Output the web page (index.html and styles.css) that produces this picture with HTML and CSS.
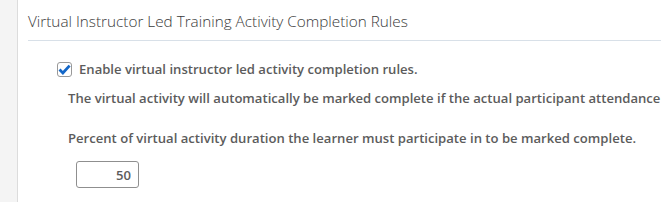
FILE: index.html
```html
<!DOCTYPE html>
<html>
<head>
<meta charset="utf-8">
<link rel="stylesheet" href="styles.css">
</head>
<body>
<div class="page">
  <div class="rail"></div>
  <div class="content">
    <h2 class="title">Virtual Instructor Led Training Activity Completion Rules</h2>
    <div class="section">
      <label class="check-row">
        <span class="checkbox">
          <svg width="13" height="13" viewBox="0 0 13 13"><path d="M1.5 6.5 L4.9 9.9 L11.6 2.6" fill="none" stroke="#1467c8" stroke-width="2.8"/></svg>
        </span>
        <span class="check-label">Enable virtual instructor led activity completion rules.</span>
      </label>
      <p class="desc">The virtual activity will automatically be marked complete if the actual participant attendance</p>
      <p class="desc percent">Percent of virtual activity duration the learner must participate in to be marked complete.</p>
      <div class="input-row">
        <input class="num" type="text" value="50">
      </div>
    </div>
  </div>
</div>
</body>
</html>
```
FILE: styles.css
```css
html, body {
  margin: 0;
  padding: 0;
  background: #ffffff;
  overflow: hidden;
}
.page {
  display: flex;
  height: 202px;
  font-family: "Open Sans", "Noto Sans", sans-serif;
}
.rail {
  width: 17px;
  flex: none;
  background: #f4f4f4;
  border-right: 1px solid #dcdcdc;
}
.content {
  flex: 1;
  padding-left: 10px;
  min-width: 0;
  white-space: nowrap;
}
.title {
  margin: 0;
  padding-top: 10px;
  height: 30px;
  font-size: 15.3px;
  font-weight: 300;
  color: #3a3a3a;
  line-height: 22px;
  border-bottom: 1px solid #d8e0e8;
}
.section {
  padding-left: 29px;
  padding-top: 20px;
}
.check-row {
  display: flex;
  align-items: center;
  gap: 7px;
  height: 16px;
}
.checkbox {
  width: 13px;
  height: 13px;
  border: 1px solid #999999;
  border-radius: 3px;
  display: flex;
  align-items: center;
  justify-content: center;
  background: #fff;
}
.check-label, .desc {
  font-size: 13.1px;
  font-weight: 600;
  color: #5c5c5c;
}
.desc {
  margin: 0;
  padding-left: 11px;
  line-height: 18px;
}
.check-row + .desc {
  margin-top: 12px;
}
.percent {
  margin-top: 22px;
}
.input-row {
  padding-left: 19px;
  margin-top: 14px;
}
.num {
  width: 63px;
  height: 27px;
  box-sizing: border-box;
  border: 1px solid #8f8f8f;
  border-radius: 3px;
  font-family: "Open Sans", "Noto Sans", sans-serif;
  font-size: 13.1px;
  font-weight: 600;
  color: #5c5c5c;
  text-align: right;
  padding: 0 7px;
}
```
